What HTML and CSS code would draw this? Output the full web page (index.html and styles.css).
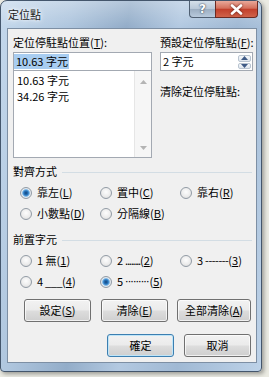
FILE: index.html
```html
<html>
    <head>
        <title>定位點</title>
        <link rel="stylesheet" href="styles.css">
    </head>
    <body>
        <div class="win">
            <div class="titlebar">
                <span class="title">定位點</span>
                <div class="caps">
                    <span class="cap help">?</span>
                    <span class="cap close">
                        <svg width="13" height="11" viewBox="0 0 13 11"><path d="M2 1.5 L11 9.5 M11 1.5 L2 9.5" stroke="#fff" stroke-width="2.6" stroke-linecap="round"/></svg>
                    </span>
                </div>
            </div>
            <div class="client">
                <div class="top">
                    <div class="lcol">
                        <div class="lbl">定位停駐點位置(<u>T</u>):</div>
                        <div class="edit"><span class="sel">10.63 字元</span></div>
                        <div class="list">
                            <div class="items">
                                <div>10.63 字元</div>
                                <div>34.26 字元</div>
                            </div>
                            <div class="vscroll">
                                <svg width="7" height="4" viewBox="0 0 7 4"><path d="M0 4 L3.5 0 L7 4Z" fill="#b4b4b4"/></svg>
                                <svg width="7" height="4" viewBox="0 0 7 4"><path d="M0 0 L7 0 L3.5 4Z" fill="#b4b4b4"/></svg>
                            </div>
                        </div>
                    </div>
                    <div class="rcol">
                        <div class="lbl">預設定位停駐點(<u>F</u>):</div>
                        <div class="spin">
                            <span>2 字元</span>
                            <div class="spinbtns">
                                <span class="sb"><svg width="7" height="4" viewBox="0 0 7 4"><path d="M0 4 L3.5 0 L7 4Z" fill="#3e5a86"/></svg></span>
                                <span class="sb"><svg width="7" height="4" viewBox="0 0 7 4"><path d="M0 0 L7 0 L3.5 4Z" fill="#3e5a86"/></svg></span>
                            </div>
                        </div>
                        <div class="lbl clear">清除定位停駐點:</div>
                    </div>
                </div>

                <div class="ghead"><span>對齊方式</span><i></i></div>
                <div class="radios">
                    <span class="radio on"><b class="dot"></b>靠左(<u>L</u>)</span>
                    <span class="radio"><b class="dot"></b>置中(<u>C</u>)</span>
                    <span class="radio"><b class="dot"></b>靠右(<u>R</u>)</span>
                    <span class="radio"><b class="dot"></b>小數點(<u>D</u>)</span>
                    <span class="radio"><b class="dot"></b>分隔線(<u>B</u>)</span>
                </div>

                <div class="ghead second"><span>前置字元</span><i></i></div>
                <div class="radios">
                    <span class="radio"><b class="dot"></b>1 無(<u>1</u>)</span>
                    <span class="radio"><b class="dot"></b>2 <span class="lead dots">........</span>(<u>2</u>)</span>
                    <span class="radio"><b class="dot"></b>3 <span class="lead">-------</span>(<u>3</u>)</span>
                    <span class="radio"><b class="dot"></b>4 <span class="lead">___</span>(<u>4</u>)</span>
                    <span class="radio on"><b class="dot"></b>5 <span class="lead mid">·········</span>(<u>5</u>)</span>
                </div>

                <div class="btnrow first">
                    <span class="btn">設定(<u>S</u>)</span>
                    <span class="btn">清除(<u>E</u>)</span>
                    <span class="btn wide">全部清除(<u>A</u>)</span>
                </div>
                <div class="btnrow last">
                    <span class="btn def">確定</span>
                    <span class="btn">取消</span>
                </div>
            </div>
        </div>
    </body>
</html>
```
FILE: styles.css
```css
*{
    margin:0;
    padding:0;
    box-sizing:border-box;
}
body{
    width:269px;
    height:377px;
    overflow:hidden;
    background:#ebebe3;
    font:11px/15px "Noto Sans CJK TC", sans-serif;
    color:#000;
}
u{
    text-decoration:underline;
    text-underline-offset:1px;
}
.win{
    width:262px;
    height:372px;
    border:1px solid #44566c;
    border-radius:7px 7px 4px 4px;
    padding:0 4px 0 6px;
    background:
        linear-gradient(180deg, rgba(255,255,255,.3) 0, rgba(255,255,255,0) 26px),
        linear-gradient(100deg, #c4d8ec 0%, #afc6de 22%, #93adc9 40%, #b3c9e1 56%, #a0b9d4 74%, #bdd2e8 100%);
    box-shadow:2px 2px 4px rgba(0,0,0,.35);
}
.titlebar{
    height:27px;
    display:flex;
    justify-content:space-between;
    align-items:center;
    padding-left:1px;
}
.title{
    color:#1a1a1a;
    text-shadow:0 0 6px #fff, 0 0 3px #fff;
}
.caps{
    align-self:flex-start;
    display:flex;
    margin-right:-1px;
}
.cap{
    height:17px;
    display:flex;
    align-items:center;
    justify-content:center;
    border:1px solid #4f5f72;
    border-top:0;
}
.help{
    width:26px;
    border-radius:0 0 0 4px;
    border-right:0;
    background:linear-gradient(180deg, #d5e0ea 0%, #b9c8d8 48%, #9caec2 52%, #b8c9dc 100%);
    color:#fff;
    font:bold 12px/1 "DejaVu Sans", sans-serif;
    text-shadow:0 0 2px #3b4a5c, 0 0 1px #3b4a5c;
}
.close{
    width:43px;
    border-radius:0 0 4px 0;
    border-color:#6b2a22;
    background:linear-gradient(180deg, #e9a99a 0%, #d4705c 45%, #c2402c 52%, #d0634a 100%);
}
.close svg{
    filter:drop-shadow(0 0 1px #5a1a12);
}
.client{
    width:250px;
    height:335px;
    border:1px solid #7d8fa4;
    background:#f0f0f0;
    padding:6px 0 0 5px;
}
.top{
    display:flex;
    height:123px;
}
.lcol{
    width:139px;
}
.rcol{
    width:93px;
    margin-left:8px;
}
.lbl{
    height:15px;
    white-space:nowrap;
}
.edit{
    margin-top:2px;
    height:19px;
    border:1px solid #a3a9b2;
    background:#fff;
    padding-top:1px;
}
.sel{
    display:inline-block;
    height:15px;
    padding:0 1px 0 2px;
    background:#a8cdf1;
}
.list{
    height:87px;
    border:1px solid #a3a9b2;
    border-top:0;
    background:#fff;
    display:flex;
}
.items{
    flex:1;
    padding:1px 0 0 3px;
    line-height:16px;
}
.vscroll{
    width:17px;
    background:#f6f6f6;
    border-left:1px solid #e6e6e6;
    display:flex;
    flex-direction:column;
    justify-content:space-between;
    align-items:center;
    padding:9px 0 7px;
}
.spin{
    margin-top:2px;
    height:19px;
    border:1px solid #a3a9b2;
    background:#fff;
    display:flex;
    padding-left:2px;
    line-height:17px;
}
.spinbtns{
    margin:2px 1px 0 auto;
    display:flex;
    flex-direction:column;
}
.sb{
    width:13px;
    height:7px;
    margin-bottom:1px;
    display:flex;
    align-items:center;
    justify-content:center;
    border:1px solid #b9c4d0;
    border-radius:2px;
    background:linear-gradient(#f4f7fa, #dfe6ee);
}
.clear{
    margin-top:13px;
}
.ghead{
    display:flex;
    align-items:center;
    height:15px;
    margin-top:6px;
}
.ghead i{
    flex:1;
    height:1px;
    margin:1px 4px 0 5px;
    background:#d3dde4;
}
.ghead.second{
    margin-top:8px;
}
.radios{
    display:grid;
    grid-template-columns:80px 80px 80px;
    grid-auto-rows:21px;
    padding:3px 0 0 7px;
}
.radio{
    display:flex;
    align-items:center;
    white-space:nowrap;
}
.dot{
    flex-shrink:0;
    width:12px;
    height:12px;
    margin-right:5px;
    border-radius:50%;
    border:1px solid #929ba5;
    background:radial-gradient(circle at 50% 40%, #fdfdfd 0, #ececec 55%, #d4d4d4 100%);
}
.radio.on .dot{
    background:radial-gradient(circle, #11427a 0, #2a78c0 2.2px, #6fb0e4 3.3px, #e4eaf0 4.3px, #d6d6d6 100%);
}
.lead{
    margin-left:2px;
    letter-spacing:-0.5px;
}
.lead.dots{
    letter-spacing:-1.2px;
}
.lead.mid{
    font-family:"DejaVu Sans", sans-serif;
    letter-spacing:-0.9px;
    margin-right:1px;
}
.btnrow{
    display:flex;
    height:23px;
}
.btnrow.first{
    margin-top:7px;
    padding-left:11px;
    gap:10px;
}
.btnrow.last{
    margin-top:12px;
    justify-content:flex-end;
    padding-right:5px;
    gap:10px;
}
.btn{
    width:67px;
    height:23px;
    border:1px solid #707070;
    border-radius:3px;
    text-align:center;
    line-height:21px;
    background:linear-gradient(180deg, #f2f2f2 0%, #ebebeb 48%, #dddddd 52%, #cfcfcf 100%);
    box-shadow:inset 0 0 0 1px rgba(255,255,255,.7);
}
.btn.wide{
    width:74px;
    margin-left:-1px;
}
.btn.def{
    border-color:#3c7fb1;
    box-shadow:inset 0 0 0 1px #bfe5f8;
}
```
